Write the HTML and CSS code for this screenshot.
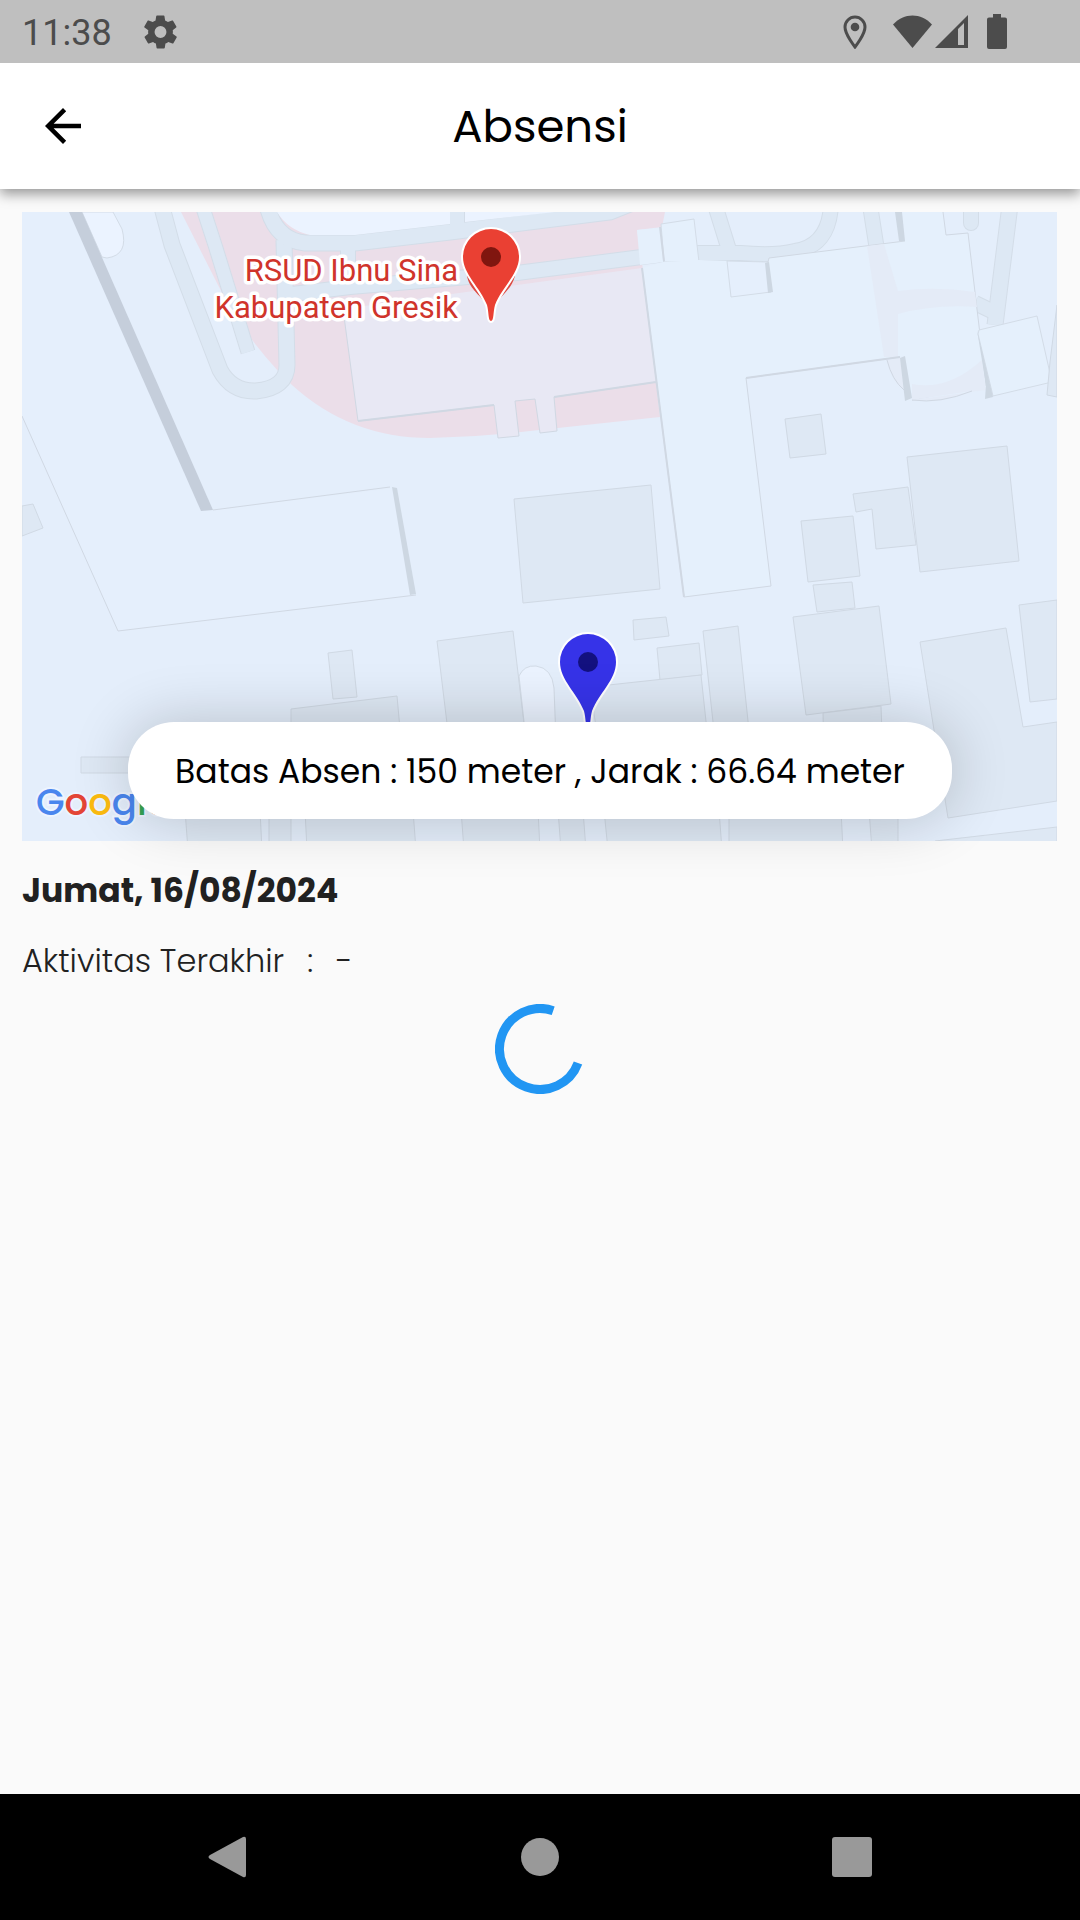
FILE: index.html
```
<!DOCTYPE html>
<html lang="id">
<head>
  <meta charset="utf-8">
  <meta name="viewport" content="width=device-width, initial-scale=1">
  <title>Absensi</title>
  <link rel="stylesheet" href="styles.css">
</head>
<body>
  <div class="screen">
    <div class="status-bar">
      <span class="clock">11:38</span>
      <svg class="gear" viewBox="2 2 20 20" aria-hidden="true"><path d="M19.4 13c0-.3.1-.6.1-1s0-.7-.1-1l2.100-1.700c.2-.1.200-.4.100-.6l-2-3.500c-.1-.2-.4-.3-.6-.2l-2.500 1c-.5-.4-1.100-.7-1.700-1l-.4-2.600c0-.2-.2-.4-.5-.4h-4c-.3 0-.5.200-.5.400l-.4 2.600c-.6.300-1.200.600-1.700 1l-2.500-1c-.2-.1-.5 0-.6.200l-2 3.500c-.1.200-.1.500.1.600L4.600 11c0 .3-.1.700-.1 1s0 .7.100 1l-2.100 1.700c-.2.100-.2.400-.1.600l2 3.500c.1.200.4.300.6.200l2.500-1c.5.400 1.100.7 1.700 1l.4 2.600c0 .2.200.4.500.4h4c.3 0 .5-.2.500-.4l.4-2.600c.6-.3 1.200-.6 1.700-1l2.500 1c.2.100.5 0 .6-.2l2-3.500c.1-.2.1-.5-.1-.6zM12 15.600a3.600 3.600 0 1 1 0-7.200 3.600 3.600 0 0 1 0 7.200z"/></svg>
      <span class="status-right">
        <svg class="icon-pin" viewBox="0 0 24 34" aria-hidden="true"><path d="M12 2C6.500 2 2 6.500 2 12c0 7.500 10 20 10 20s10-12.500 10-20C22 6.500 17.500 2 12 2z" fill="none" stroke="#4c4c4c" stroke-width="3"/><circle cx="12" cy="12" r="4.300"/></svg>
        <svg class="icon-wifi" viewBox="0 0 39 34" aria-hidden="true"><path d="M0 9.500C11-2.500 28-2.500 39 9.500L19.500 33z"/></svg>
        <svg class="icon-signal" viewBox="0 0 33 34" aria-hidden="true"><path fill-rule="evenodd" d="M0 33L33 0v33zM23 14v16h6V8z"/></svg>
        <svg class="icon-battery" viewBox="0 0 20 35" aria-hidden="true"><path d="M6 0h8v3.500h4a2 2 0 0 1 2 2V33a2 2 0 0 1-2 2H2a2 2 0 0 1-2-2V5.500a2 2 0 0 1 2-2h4z"/></svg>
      </span>
    </div>

    <header class="app-bar">
      <button class="back" type="button" aria-label="Kembali">
        <svg viewBox="0 0 24 24" aria-hidden="true"><path d="M20 11H7.830l5.590-5.590L12 4l-8 8 8 8 1.410-1.410L7.830 13H20v-2z"/></svg>
      </button>
      <h1 class="title">Absensi</h1>
    </header>

    <main class="content">
      <section class="map" aria-label="Peta lokasi absensi">
        <svg class="map-canvas" viewBox="22 212 1035 629" preserveAspectRatio="xMidYMid slice">
          <rect class="ground" x="22" y="212" width="1035" height="629"/>

          <!-- hospital grounds -->
          <path class="hospital-area" d="M181 212L218 285Q240 330 279 372L292 385Q350 438 430 438Q480 437 530 431L660 417L642 262L637 230L662 227L665 212z"/>

          <!-- west side -->
          <path class="plot" d="M22 416L118 631L416 595L397 488L213 510L82 212H22z"/>
          <path class="edge" d="M22 416L118 631L416 595M213 510L390 487"/>
          <path class="lawn outlined" d="M82 212H113L122 229Q129 255 107 258L102 257z"/>
          <path class="wall" d="M69 212H82L213 510L201 511z"/>
          <path class="wall soft" d="M392 487L397 488L416 594L410 595z"/>
          <path class="block" d="M22 506L33 504L43 528L22 536z"/>

          <!-- roads -->
          <g class="road-edge">
            <path d="M160 200L172 245L220 370Q232 392 256 391Q287 388 287 365L284 240" stroke-width="17"/>
            <path d="M202 205L215 245L248 352" stroke-width="15"/>
            <path d="M267 205Q275 240 305 243L355 243L450 232L610 212L640 200" stroke-width="17"/>
            <path d="M457 205V232M348 243V290" stroke-width="16"/>
            <path d="M284 295L350 287L517 273L665 254" stroke-width="16"/>
            <path d="M697 253L740 253Q775 256 795 251Q829 246 831 205" stroke-width="16"/>
            <path d="M715 205L729 250M870 205L877 250" stroke-width="16"/>
            <path d="M1010 205L995 325" stroke-width="17"/>
            <path d="M971 205V223" stroke-width="16" stroke-linecap="round"/>
            <path d="M975 303L1000 315" stroke-width="16"/>
          </g>
          <g class="road">
            <path d="M160 200L172 245L220 370Q232 392 256 391Q287 388 287 365L284 240" stroke-width="15"/>
            <path d="M202 205L215 245L248 352" stroke-width="13"/>
            <path d="M267 205Q275 240 305 243L355 243L450 232L610 212L640 200" stroke-width="15"/>
            <path d="M457 205V232M348 243V290" stroke-width="14"/>
            <path d="M284 295L350 287L517 273L665 254" stroke-width="14"/>
            <path d="M697 253L740 253Q775 256 795 251Q829 246 831 205" stroke-width="14"/>
            <path d="M715 205L729 250M870 205L877 250" stroke-width="14"/>
            <path d="M1010 205L995 325" stroke-width="15"/>
            <path d="M971 205V223" stroke-width="14" stroke-linecap="round"/>
            <path d="M975 303L1000 315" stroke-width="14"/>
          </g>
          <path class="lawn" d="M277 212Q288 230 310 235H355L450 224V212zM465 212V222L555 212z"/>

          <!-- hospital building -->
          <path class="hospital" d="M343 309L642 268L656 382L554 397L557 431L540 433L535 399L515 401L519 436L498 438L494 405L358 421z"/>
          <path class="edge" d="M343 309L358 421L494 405L498 438L519 436L515 401L535 399L540 433L557 431L554 397L656 382"/>

          <!-- east side -->
          <path class="plot light" d="M637 230L660 228L663 262L640 265z"/>
          <path class="plot light outlined" d="M661 224L694 219L699 262L664 262z"/>
          <path class="plot light" d="M642 268L663 262L699 260L768 262L769 258L905 241L902 212H943L946 235L968 233L986 390L912 400L904 356L746 378L771 586L684 597z"/>
          <path class="edge" d="M642 268L684 597L771 586L746 378L900 357M768 262L769 258L905 241M943 212L946 235L968 233L986 385L912 400"/>
          <path class="ghost" d="M867 246L884 244L898 291Q935 286 975 292L977 307Q935 304 898 314V357H884z"/>
          <path class="ghost" d="M912 384Q948 391 982 360L986 390L912 400zM887 360L900 358L904 390Q891 380 887 360zM912 400Q940 404 972 391z"/>
          <path class="edge" d="M887 360Q892 380 904 390M912 400Q940 404 972 391"/>
          <path class="plot outlined" d="M727 261L731 297L771 292L768 262z"/>
          <path class="plot light outlined" d="M979 330L1037 316L1052 382L993 396L978 334z"/>
          <path class="wall soft" d="M765 263L769 262L773 292L768 293zM895 212H902L905 241H899zM900 358L905 356L912 398L905 401zM977 330L993 397L985 399L986 385z"/>
          <path class="edge strong" d="M660 227L664 261M746 378L900 357M642 268L684 597M358 421L494 405M554 397L656 382"/>
          <path class="block" d="M1057 305L1050 362L1047 395L1057 397z"/>

          <!-- surrounding buildings -->
          <g class="block">
            <path d="M785 419L821 414L826 454L790 458z"/>
            <path d="M853 494L908 487L916 545L876 549L872 509L856 512z"/>
            <path d="M907 457L1007 446L1019 561L920 572z"/>
            <path d="M801 521L853 516L860 576L808 582z"/>
            <path d="M813 585L852 582L855 608L817 612z"/>
            <path d="M793 617L879 606L891 704L806 715z"/>
            <path d="M823 713L881 706L883 760H824z"/>
            <path d="M514 499L651 485L660 589L523 603z"/>
            <path d="M633 620L666 617L669 636L634 640z"/>
            <path d="M703 631L738 626L750 740H715z"/>
            <path d="M657 648L699 643L702 675L660 680z"/>
            <path d="M590 687L701 675L708 740H598z"/>
            <path d="M920 642L1006 628L1023 727L1057 722V801L948 818z"/>
            <path d="M1019 605L1057 600V699L1030 702z"/>
            <path d="M437 641L513 631L526 740H449z"/>
            <path d="M328 653L352 650L357 697L333 699z"/>
            <path d="M291 709L397 696L401 740H291z"/>
            <path d="M81 757H140V773H81z"/>
            <path d="M185 810H260L262 850H188zM269 810H291V850H269zM305 810H413L416 850H307zM461 810H538L540 850H464zM558 810H583L586 850H561zM604 810L608 850H722L719 810zM729 810V850H843L841 810zM869 810L872 850H898V810z"/>
            <path d="M935 841L1057 827V850H935z"/>
          </g>
          <path class="lawn outlined" d="M519 676Q524 665 536 666Q552 668 554 688L556 740H526z"/>

          <g class="place-label">
            <text x="458" y="281">RSUD Ibnu Sina</text>
            <text x="458" y="318">Kabupaten Gresik</text>
          </g>

          <!-- place pin -->
          <path class="pin-back" d="M467 276C470 291 482 295 488 308H494C500 295 511 291 515 276z"/>
          <path class="pin red" d="M491 321C488 321 489 312 487 305C480 287 463 274 463 257A28 28 0 0 1 519 257C519 274 502 287 495 305C493 312 494 321 491 321z"/>
          <circle class="dot red" cx="491" cy="257" r="10"/>

          <!-- user pin -->
          <path class="pin blue" d="M588 726C585 726 586 718 584 711C577 693 560 680 560 662A28 28 0 0 1 616 662C616 680 599 693 592 711C590 718 591 726 588 726z"/>
          <circle class="dot blue" cx="588" cy="662" r="10"/>

          <text class="map-brand" x="36" y="815"><tspan fill="#4a86ee">G</tspan><tspan fill="#e34536">o</tspan><tspan fill="#fbbb10">o</tspan><tspan fill="#4a86ee">g</tspan><tspan fill="#35a556">l</tspan><tspan fill="#e34536">e</tspan></text>
        </svg>
        <p class="distance">Batas Absen : 150 meter , Jarak : 66.64 meter</p>
      </section>

      <h2 class="date">Jumat, 16/08/2024</h2>
      <p class="activity"><span>Aktivitas Terakhir</span><span>:</span><span>-</span></p>
      <svg class="spinner" viewBox="0 0 90 90" role="img" aria-label="Memuat"><path d="M58.200 6.700A40.500 40.500 0 1 0 83 59"/></svg>
    </main>

    <nav class="nav-bar" aria-label="Navigasi sistem">
      <button type="button" aria-label="Kembali"><svg viewBox="0 0 42 42"><path d="M3 19L36 1Q39 0 39 3V39Q39 42 36 41L3 23Q0 21 3 19z"/></svg></button>
      <button type="button" aria-label="Beranda"><svg viewBox="0 0 42 42"><circle cx="21" cy="21" r="19"/></svg></button>
      <button type="button" aria-label="Terbaru"><svg viewBox="0 0 42 42"><rect x="1" y="1" width="40" height="40" rx="3"/></svg></button>
    </nav>
  </div>
</body>
</html>
```
FILE: styles.css
```
* {
  box-sizing: border-box;
}

body {
  margin: 0;
  background: #fafafa;
  color: #212121;
  font-family: Poppins, Inter, sans-serif;
}

h1, h2, p {
  margin: 0;
  font-weight: 400;
}

button {
  padding: 0;
  border: 0;
  background: none;
}

svg {
  display: block;
}

.screen {
  display: flex;
  flex-direction: column;
  min-height: 100vh;
}

/* Status bar */
.status-bar {
  position: relative;
  z-index: 1;
  display: flex;
  align-items: center;
  height: 63px;
  padding: 0 73px 0 22px;
  background: #bfbfbf;
  color: #4c4c4c;
  fill: #4c4c4c;
}

.clock {
  padding-top: 3px;
  font: 36px/1 Roboto, sans-serif;
}

.gear {
  width: 33px;
  height: 34px;
  margin-left: 32px;
}

.status-right {
  display: flex;
  align-items: center;
  margin-left: auto;
}

.icon-pin {
  width: 24px;
  height: 34px;
  margin-right: 26px;
}

.icon-wifi {
  width: 39px;
  height: 34px;
  margin-right: 3px;
}

.icon-signal {
  width: 33px;
  height: 34px;
  margin-right: 19px;
}

.icon-battery {
  width: 20px;
  height: 35px;
}

/* App bar */
.app-bar {
  position: relative;
  display: grid;
  grid-template-columns: 126px 1fr 126px;
  align-items: center;
  height: 126px;
  background: #fff;
  box-shadow: 0 5px 12px rgba(0, 0, 0, 0.4);
  color: #000;
}

.back {
  display: grid;
  place-items: center;
  height: 126px;
}

.back svg {
  width: 54px;
  height: 54px;
}

.title {
  padding-top: 2px;
  font-size: 45px;
  line-height: 56px;
  text-align: center;
}

/* Content */
.content {
  display: flex;
  flex: 1;
  flex-direction: column;
  padding: 23px 23px 0 22px;
}

.map {
  position: relative;
  aspect-ratio: 1035 / 629;
}

.map-canvas {
  width: 100%;
  height: 100%;
}

.ground { fill: #e4eefb; }
.plot { fill: #e5effc; }
.plot.light { fill: #e5f0fc; }
.lawn { fill: #ebf3ff; }
.outlined { stroke: #d3dce7; }
.hospital-area { fill: #ebdee9; }
.hospital { fill: #e8e8f4; }
.block { fill: #dee8f4; stroke: #d0d9e4; }
.wall { fill: #c5cedb; }
.wall.soft { fill: #cdd7e2; }
.ghost { fill: #e4ebf7; }
.edge { fill: none; stroke: #d0d8e3; }
.edge.strong { stroke-width: 2; }
.road, .road-edge { fill: none; }
.road { stroke: #dde8f4; }
.road-edge { stroke: #d3dde8; }

.place-label {
  fill: #d0342b;
  stroke: #fff;
  stroke-width: 7px;
  stroke-linejoin: round;
  paint-order: stroke;
  font: 31px Roboto, sans-serif;
  text-anchor: end;
}

.pin {
  stroke: #fff;
  stroke-width: 4px;
  paint-order: stroke;
}

.pin-back { fill: #dc4a42; }
.pin.red { fill: #ea4033; }
.pin.blue { fill: #3633e8; }
.dot.red { fill: #80160f; }
.dot.blue { fill: #13117f; }

.map-brand {
  font: 500 37px Poppins, Lato, sans-serif;
  stroke: #edf4ff;
  stroke-width: 4px;
  paint-order: stroke;
}

.distance {
  position: absolute;
  right: 105px;
  bottom: 22px;
  left: 106px;
  padding: 25px 0 23px;
  border-radius: 46px;
  background: #fff;
  box-shadow: 0 0 60px rgba(0, 0, 0, 0.2);
  color: #000;
  font-size: 33px;
  line-height: 49px;
  text-align: center;
}

.date {
  margin-top: 26px;
  font-size: 33px;
  font-weight: 700;
  line-height: 48px;
}

.activity {
  display: flex;
  gap: 23px;
  margin-top: 22px;
  font-size: 32px;
  font-weight: 300;
  line-height: 48px;
}

.spinner {
  align-self: center;
  width: 90px;
  height: 90px;
  margin-top: 19px;
  fill: none;
  stroke: #2196f3;
  stroke-width: 9px;
}

/* System navigation */
.nav-bar {
  display: flex;
  height: 126px;
  padding: 0 72px;
  background: #000;
}

.nav-bar button {
  display: grid;
  flex: 1;
  place-items: center;
}

.nav-bar svg {
  width: 42px;
  height: 42px;
  fill: #999;
}
```
